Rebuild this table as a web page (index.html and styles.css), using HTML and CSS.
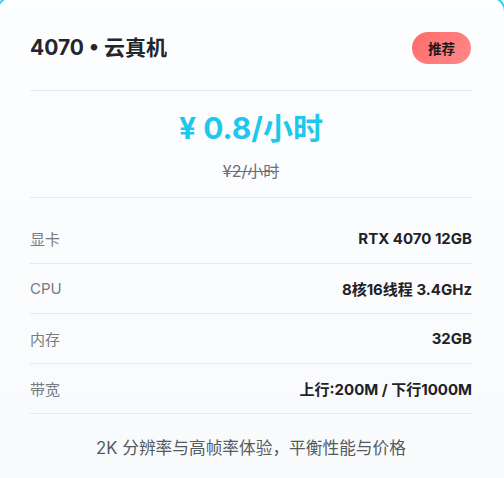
FILE: index.html
```html
<!DOCTYPE html>
<html lang="zh-CN">
<head>
<meta charset="utf-8">
<title>4070 云真机</title>
<link rel="stylesheet" href="styles.css">
</head>
<body>
<div class="card">
  <div class="header">
    <h2 class="title">4070 • 云真机</h2>
    <span class="badge">推荐</span>
  </div>
  <div class="price-box">
    <div class="price">¥ 0.8/小时</div>
    <div class="orig">¥2/小时</div>
  </div>
  <div class="specs">
    <div class="row"><span class="label">显卡</span><span class="value">RTX 4070 12GB</span></div>
    <div class="row"><span class="label">CPU</span><span class="value">8核16线程 3.4GHz</span></div>
    <div class="row"><span class="label">内存</span><span class="value">32GB</span></div>
    <div class="row"><span class="label">带宽</span><span class="value">上行:200M / 下行1000M</span></div>
  </div>
  <p class="desc">2K 分辨率与高帧率体验，平衡性能与价格</p>
</div>
</body>
</html>
```
FILE: styles.css
```css
html, body {
  margin: 0;
  padding: 0;
  height: 100%;
  overflow: hidden;
  background: #f8fafc;
  font-family: Inter, "Noto Sans CJK SC", sans-serif;
}
.card {
  margin: -4px -2px 0 -4px;
  border: 2px solid #22d3ee;
  border-radius: 16px;
  background: linear-gradient(180deg, #fdfeff 0%, #f7f9fc 100%);
  padding: 34px 32px 40px 32px;
  min-height: 520px;
}
.header {
  display: flex;
  align-items: center;
  justify-content: space-between;
  padding-bottom: 26px;
  border-bottom: 1px solid #e6e9ee;
}
.title {
  margin: 0;
  font-size: 21px;
  font-weight: 700;
  color: #23262b;
  line-height: 32px;
}
.badge {
  display: inline-flex;
  align-items: center;
  justify-content: center;
  width: 59px;
  height: 32px;
  border-radius: 16px;
  background: linear-gradient(135deg, #ff6b6b 0%, #ff8a8a 100%);
  color: #1a1a1c;
  font-size: 13.5px;
  font-weight: 700;
  margin-right: 1px;
}
.price-box {
  display: flex;
  flex-direction: column;
  align-items: center;
  padding: 18px 0 15px;
  border-bottom: 1px solid #e6e9ee;
}
.price {
  font-size: 30px;
  font-weight: 700;
  line-height: 38px;
  color: #1ec8ec;
}
.orig {
  margin-top: 13px;
  font-size: 16px;
  line-height: 22px;
  color: #6b6f76;
  text-decoration: line-through;
}
.specs {
  padding-top: 16px;
}
.row {
  display: flex;
  justify-content: space-between;
  align-items: center;
  height: 49px;
  border-bottom: 1px solid #e6e9ee;
}
.label {
  font-size: 15px;
  color: #777b82;
}
.value {
  font-size: 15px;
  font-weight: 700;
  color: #1f2226;
}
.desc {
  margin: 23px 0 0;
  text-align: center;
  font-size: 16.7px;
  line-height: 22px;
  color: #555a60;
}
```
